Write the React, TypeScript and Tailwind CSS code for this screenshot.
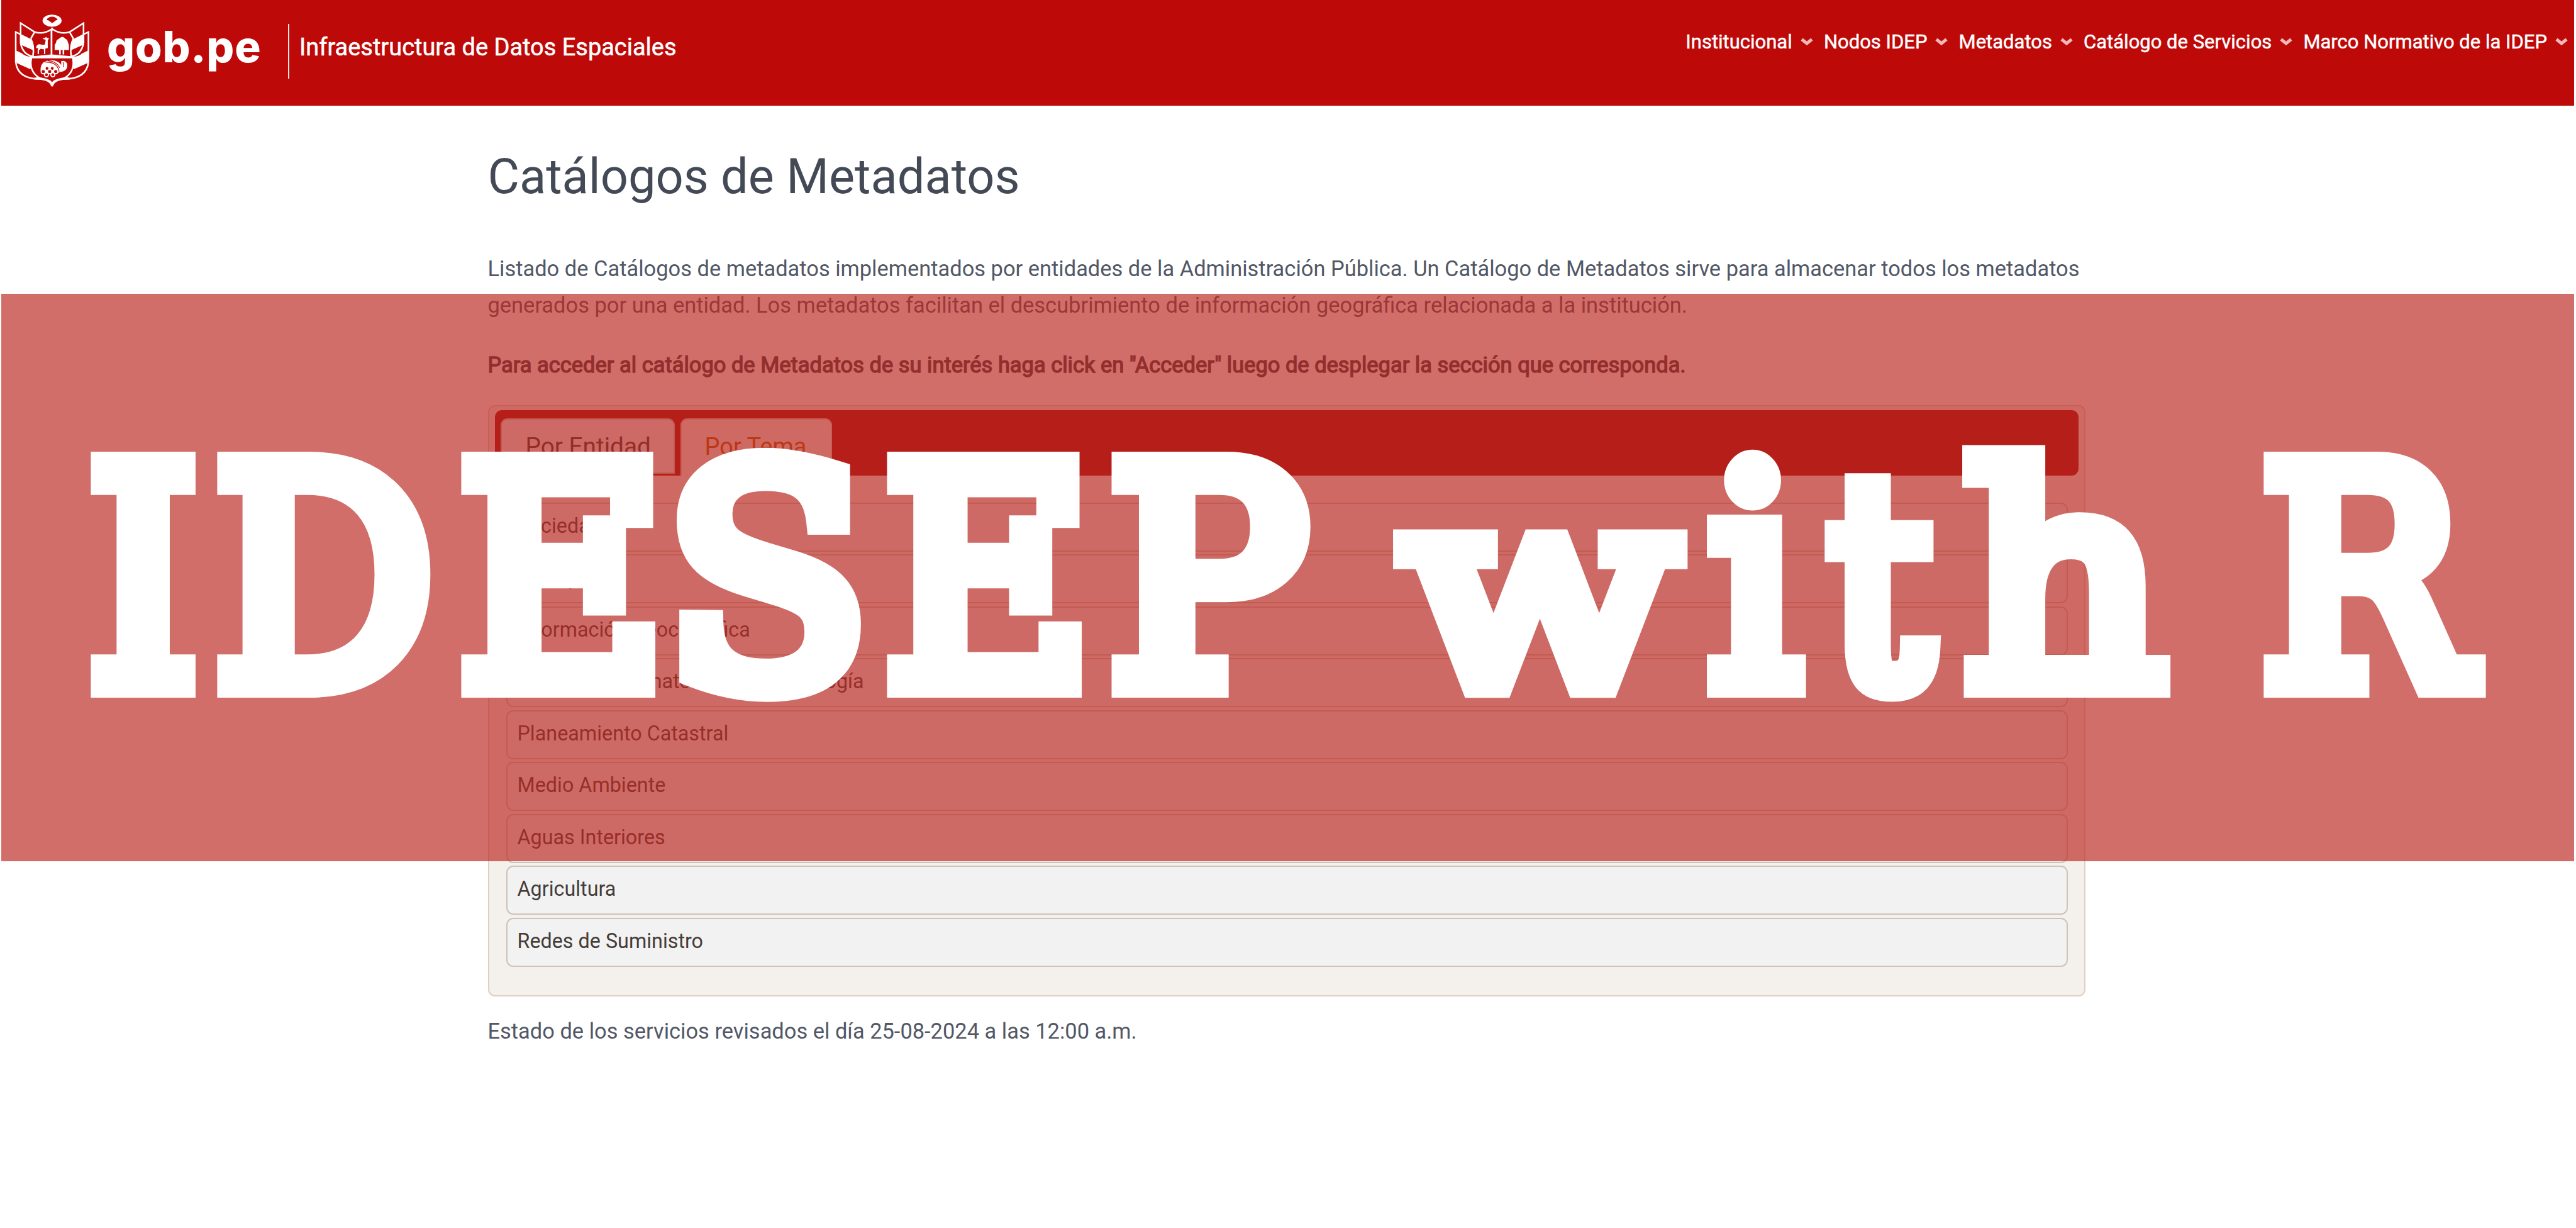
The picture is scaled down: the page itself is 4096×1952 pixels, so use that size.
import React from "react";

const NAV = [
  "Institucional",
  "Nodos IDEP",
  "Metadatos",
  "Catálogo de Servicios",
  "Marco Normativo de la IDEP",
];

const TOPICS = [
  "Sociedad",
  "Transporte",
  "Información Geocientífica",
  "Atmósfera, Climatología, Meteorología",
  "Planeamiento Catastral",
  "Medio Ambiente",
  "Aguas Interiores",
  "Agricultura",
  "Redes de Suministro",
];

function Chevron() {
  return (
    <svg viewBox="0 0 20 12" className="mt-[13px] ml-[13px] h-[12px] w-[20px]" fill="none">
      <path d="M2 2.5 L10 9 L18 2.5" stroke="#f3b9b9" strokeWidth="5" />
    </svg>
  );
}

function CrestHalf() {
  return (
    <g stroke="#fff" strokeWidth="11" fill="none" strokeLinejoin="miter">
      <path d="M143 300 V160 L240 222 L213 268" />
      <path d="M143 238 L109 222 V425 Q118 548 285 548" />
      <path d="M213 268 Q240 315 228 392" />
      <path d="M240 222 Q305 240 360 200" />
      <path d="M143 300 Q160 380 225 390" />
      <path d="M217 400 Q203 478 248 520 Q275 546 300 548" />
      <path d="M118 432 L212 474" />
      <path d="M137 232 L213 270 Q235 300 234 350 L148 312 Z" fill="#fff" stroke="none" />
      <path d="M110 350 L150 368 Q180 394 222 392 L212 476 L112 430 Z" fill="#fff" stroke="none" />
      <path d="M235 536 Q290 534 318 545 Q352 555 361 570 V600 Q352 600 351 588 Q340 560 290 554 Z" fill="#fff" stroke="none" />
    </g>
  );
}

function Crest() {
  return (
    <svg viewBox="0 0 728 732" className="h-[168px] w-[167px] shrink-0">
      <ellipse cx="361" cy="143" rx="66" ry="42" fill="#fff" />
      <path d="M322 137 Q336 115 361 115 Q386 115 400 137 Q384 140 376 150 L361 160 L348 150 Q338 140 322 137Z" fill="#be0909" />
      <path d="M361 185 L352 206 L361 214 L370 206 Z" fill="#fff" />
      <CrestHalf />
      <g transform="translate(722 0) scale(-1 1)">
        <CrestHalf />
      </g>
      <rect x="351" y="205" width="12" height="182" fill="#fff" />
      <path d="M218 390 Q300 382 345 378 H372 Q420 382 504 390 V404 H218 Z" fill="#fff" />
      <path
        d="M299 262 L313 262 L319 254 L324 262 L338 264 V271 L331 276 V332 L314 338 V374 H305 V342 L282 338 L270 350 V374 H261 V346 L265 334 L250 332 Q252 306 276 306 Q296 314 311 308 L317 276 L299 270 Z"
        fill="#fff"
      />
      <path
        d="M379 346 V312 Q384 300 389 296 Q388 276 406 270 Q418 258 432 255 Q446 258 452 268 Q470 276 470 292 Q478 306 478 320 V346 Z"
        fill="#fff"
      />
      <rect x="410" y="345" width="11" height="32" fill="#fff" />
      <rect x="434" y="345" width="11" height="32" fill="#fff" />
      <path d="M281 490 Q278 425 340 418 Q400 412 424 450 V424 Q448 414 466 440 Q472 480 440 494 L412 500 L390 510 L300 500 Z" fill="#fff" />
      <path d="M312 430 Q370 428 396 460 Q408 478 410 496 M436 430 Q448 450 438 464 M330 420 Q392 424 414 470" stroke="#be0909" strokeWidth="5" fill="none" />
      <g fill="#be0909" stroke="#fff" strokeWidth="8">
        <circle cx="326" cy="474" r="14" />
        <circle cx="362" cy="474" r="14" />
        <circle cx="300" cy="496" r="15" />
        <circle cx="344" cy="496" r="15" />
        <circle cx="386" cy="496" r="15" />
        <circle cx="322" cy="518" r="14" />
        <circle cx="366" cy="518" r="14" />
      </g>
    </svg>
  );
}

function Header() {
  return (
    <header className="mr-[3px] ml-[2px] flex h-[168px] items-start bg-[#be0909] text-white">
      <div className="-ml-[2px] flex">
        <Crest />
        <span className="mt-[34px] w-[291px] pl-[3px] font-['Inter',sans-serif] text-[69px] leading-[80px] font-extrabold tracking-[0.8px]">
          gob.pe
        </span>
      </div>
      <div className="mt-[38px] h-[87px] w-[2px] bg-[#fbe3e3]" />
      <span className="mt-[45px] ml-[16px] text-[37.96px] leading-[60px] whitespace-nowrap [-webkit-text-stroke:0.5px_white]">
        Infraestructura de Datos Espaciales
      </span>
      <nav className="mt-[47px] mr-[10px] ml-auto flex gap-[17.1px]">
        {NAV.map((label) => (
          <a key={label} className="flex text-[31px] leading-[40px] whitespace-nowrap [-webkit-text-stroke:0.5px_white]">
            {label}
            <Chevron />
          </a>
        ))}
      </nav>
    </header>
  );
}

function TopicPanel() {
  return (
    <section className="mt-[34.4px] h-[940px] w-[2540px] rounded-[11px] border-2 border-[#e0cfc2] bg-[#f4f0ec] px-[9px] pt-[6px]">
      <div className="flex h-[104px] items-start gap-[9px] rounded-[11px] bg-[#a80c08] pt-[13px] pl-[9px] text-[38.75px] leading-[58px]">
        <div className="h-[88px] w-[277px] rounded-t-[11px] border-2 border-[#cdc3b7] bg-[#f2f2f2] pt-[14px] pl-[38px] text-[#3f3731]">
          Por Entidad
        </div>
        <div className="h-[91px] w-[241px] rounded-t-[11px] border-2 border-b-0 border-[#e0cfc2] bg-[#f4f0ec] pt-[14px] pl-[37px] text-[38px] text-[#b85700]">
          Por Tema
        </div>
      </div>
      <ul className="mt-[43px] mr-[17px] ml-[18px] flex flex-col gap-[4.5px]">
        {TOPICS.map((topic) => (
          <li
            key={topic}
            className="h-[78px] rounded-[11px] border-2 border-[#cdc3b7] bg-[#f2f2f2] pl-[16px] text-[32.3px] leading-[71.6px] text-[#453d38]"
          >
            {topic}
          </li>
        ))}
      </ul>
    </section>
  );
}

type Glyph = { ch: string; x0: number; x1: number; rise?: number };

const SIZE = 476;
const STROKE = 44;
const PROBE = 250;

/* x0 and x1 are the edges of the stretched letter on the banner; rise scales its height. */
const WORDS: Glyph[][] = [
  [
    { ch: "I", x0: 143, x1: 311 },
    { ch: "D", x0: 344, x1: 686 },
    { ch: "E", x0: 732, x1: 1043 },
    { ch: "S", x0: 1076, x1: 1369 },
    { ch: "E", x0: 1409, x1: 1721 },
    { ch: "P", x0: 1766, x1: 2085 },
  ],
  [
    { ch: "w", x0: 2215, x1: 2684, rise: 0.92 },
    { ch: "i", x0: 2714, x1: 2873, rise: 1 },
    { ch: "t", x0: 2901, x1: 3086, rise: 0.97 },
    { ch: "h", x0: 3120, x1: 3453, rise: 0.99 },
  ],
  [{ ch: "R", x0: 3598, x1: 3954 }],
];

function inkEdges(ch: string): [number, number] {
  const ctx = document.createElement("canvas").getContext("2d")!;
  ctx.font = `400 ${PROBE}px "DejaVu Serif"`;
  const m = ctx.measureText(ch);
  return [-m.actualBoundingBoxLeft / PROBE, m.actualBoundingBoxRight / PROBE];
}

function Banner() {
  let cursor = 2;
  return (
    <div className="absolute top-[467px] right-[3px] left-[2px] h-[902px] bg-[#bd2922]/68 pt-[155px]">
      <h1 className="flex font-['DejaVu_Serif',serif] text-[476px] leading-[600px] font-normal text-white [-webkit-text-stroke:44px_white]">
        {WORDS.map((word, w) => (
          <span key={w} className="flex">
            {word.map((g) => {
              const gap = g.x0 - cursor;
              cursor = g.x1;
              const width = g.x1 - g.x0;
              const [left, right] = inkEdges(g.ch);
              const scale = width / ((right - left) * SIZE + STROKE);
              const shift = STROKE / 2 - left * SIZE;
              return (
                <span key={g.x0} className="inline-block" style={{ width, marginLeft: gap }}>
                  <span
                    className="inline-block origin-[0_489px]"
                    style={{ transform: `scale(${scale}, ${g.rise ?? 1}) translateX(${shift}px)` }}
                  >
                    {g.ch}
                  </span>
                </span>
              );
            })}
          </span>
        ))}
      </h1>
    </div>
  );
}

export default function App() {
  return (
    <div className="relative h-[1952px] w-[4096px] overflow-hidden bg-white font-['Roboto',sans-serif]">
      <Header />
      <main className="ml-[775.5px] w-[2541px] text-[34.45px] leading-[58.1px] text-[#525866]">
        <h2 className="pt-[68.4px] text-[77.6px] leading-[90px] text-[#434a56]">Catálogos de Metadatos</h2>
        <p className="mt-[71.8px]">
          Listado de Catálogos de metadatos implementados por entidades de la Administración Pública. Un Catálogo de
          Metadatos sirve para almacenar todos los metadatos generados por una entidad. Los metadatos facilitan el
          descubrimiento de información geográfica relacionada a la institución.
        </p>
        <p className="mt-[37px] text-[#383d49] [-webkit-text-stroke:1.4px_#383d49]">
          Para acceder al catálogo de Metadatos de su interés haga click en "Acceder" luego de desplegar la sección que
          corresponda.
        </p>
        <TopicPanel />
        <p className="mt-[26.4px]">Estado de los servicios revisados el día 25-08-2024 a las 12:00 a.m.</p>
      </main>
      <Banner />
    </div>
  );
}
